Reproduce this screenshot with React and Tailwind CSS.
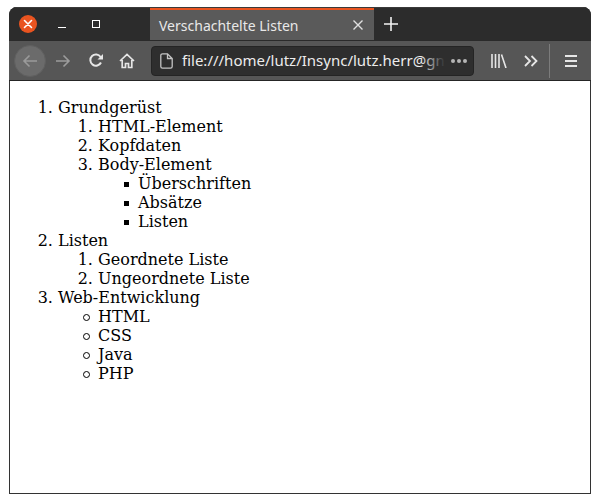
import React from 'react'

function Item({ children, sub }) {
  return (
    <li>
      {children}
      {sub}
    </li>
  )
}

function Square({ children }) {
  return (
    <li className="relative before:absolute before:left-[-14px] before:top-[8px] before:w-[5px] before:h-[5px] before:bg-black">
      {children}
    </li>
  )
}

function Circle({ children }) {
  return (
    <li className="relative before:absolute before:left-[-15px] before:top-[7px] before:w-[7px] before:h-[7px] before:rounded-full before:border before:border-black">
      {children}
    </li>
  )
}

export default function App() {
  return (
    <div className="w-[600px] h-[503px] bg-white pt-[7px] pl-[9px] pr-[9px] pb-[9px] overflow-hidden">
      <div className="h-full flex flex-col rounded-t-[8px] overflow-hidden bg-[#2c2c2c]">
        {/* Tab strip */}
        <div className="h-[33px] shrink-0 flex bg-[#2c2c2c] border-t border-[#3a3a3a]">
          <div className="w-[141px] shrink-0 flex items-center pl-[10px]">
            <div className="w-[18px] h-[18px] rounded-full bg-[#e95420] flex items-center justify-center">
              <svg width="10" height="10" viewBox="0 0 10 10" stroke="#fff" strokeWidth="1.6" strokeLinecap="round">
                <path d="M1.5 1.5 8.5 8.5M8.5 1.5 1.5 8.5" />
              </svg>
            </div>
            <div className="ml-[21px] w-[8px] h-[1px] mt-[6px] bg-white"></div>
            <div className="ml-[26px] w-[8px] h-[8px] border border-white"></div>
          </div>
          <div className="w-[224px] shrink-0 bg-[#5a5a5a] border-t-2 border-[#e95420] flex items-center pl-[9px] pr-[11px] justify-between text-[#e8e8e8]">
            <span className="font-['Noto_Sans',sans-serif] text-[14px] whitespace-nowrap">Verschachtelte Listen</span>
            <svg width="10" height="10" viewBox="0 0 10 10" stroke="#e0e0e0" strokeWidth="1.4">
              <path d="M.5.5l9 9M9.5.5l-9 9" />
            </svg>
          </div>
          <div className="w-[34px] flex items-center justify-center">
            <svg width="14" height="14" viewBox="0 0 14 14" stroke="#f2f2f2" strokeWidth="1.6">
              <path d="M7 0v14M0 7h14" />
            </svg>
          </div>
        </div>

        {/* Toolbar */}
        <div className="h-[41px] shrink-0 flex items-center bg-[#565656] border-t border-[#2a2a2a] border-b border-b-[#252525] relative">
          <div className="ml-[5px] w-[32px] h-[32px] rounded-full bg-[#6b6b6b] border border-[#5f5f5f] flex items-center justify-center">
            <svg width="16" height="14" viewBox="0 0 16 14" fill="none" stroke="#9a9a9a" strokeWidth="1.6">
              <path d="M15 7H2M7.5 1.5 2 7l5.5 5.5" />
            </svg>
          </div>
          <svg className="ml-[9px]" width="16" height="14" viewBox="0 0 16 14" fill="none" stroke="#9c9c9c" strokeWidth="1.6">
            <path d="M1 7h13M8.5 1.5 14 7l-5.5 5.5" />
          </svg>
          <svg className="ml-[17px]" width="16" height="15" viewBox="0 0 16 15" fill="none" stroke="#e6e6e6" strokeWidth="2">
            <path d="M13 9.5A5.6 5.6 0 1 1 12.6 4" />
            <path d="M15 1v5.5H9.500z" fill="#e6e6e6" stroke="none" />
          </svg>
          <svg className="ml-[15px]" width="16" height="16" viewBox="0 0 16 16" fill="none" stroke="#e6e6e6" strokeWidth="1.7">
            <path d="M1 8 8 1.500 15 8M3.200 7v7.500h3.300v-4h3v4h3.300V7" />
          </svg>
          <div className="ml-[16px] w-[323px] h-[30px] rounded-[4px] bg-[#2e2e2e] border border-[#242424] flex items-center pl-[8px] pr-[7px]">
            <svg className="shrink-0" width="13" height="16" viewBox="0 0 13 16" fill="none" stroke="#c4c4c4" strokeWidth="1.3">
              <path d="M2.500.8h5l4.700 4.700v8a1.700 1.700 0 0 1-1.700 1.700h-8A1.700 1.700 0 0 1 .8 13.500V2.500A1.700 1.700 0 0 1 2.500.8zM7.500.8v4.700h4.700" />
            </svg>
            <div className="ml-[9px] flex-1 relative font-['Noto_Sans',sans-serif] text-[15px] text-[#ececec] whitespace-nowrap">
              file:///home/lutz/Insync/lutz.herr@gn
              <div className="absolute right-0 top-0 bottom-0 w-[24px] bg-gradient-to-r from-transparent to-[#2e2e2e]"></div>
            </div>
            <div className="ml-[6px] flex gap-[2px] shrink-0">
              <span className="w-[4px] h-[4px] rounded-full bg-[#b5b5b5]"></span>
              <span className="w-[4px] h-[4px] rounded-full bg-[#b5b5b5]"></span>
              <span className="w-[4px] h-[4px] rounded-full bg-[#b5b5b5]"></span>
            </div>
          </div>
          <svg className="ml-[17px]" width="16" height="14" viewBox="0 0 16 14" fill="none" stroke="#e6e6e6" strokeWidth="1.6">
            <path d="M1 0v14M4.500 0v14M8 0v14M10.500.5l4.500 13.500" />
          </svg>
          <svg className="ml-[17px]" width="14" height="12" viewBox="0 0 14 12" fill="none" stroke="#e6e6e6" strokeWidth="1.8">
            <path d="M1 1l5 5-5 5M7.500 1l5 5-5 5" />
          </svg>
          <div className="ml-[11px] w-[1px] h-[34px] bg-[#7c7c7c]"></div>
          <div className="ml-[15px] w-[12px] flex flex-col gap-[3px]">
            <div className="h-[2px] bg-[#e6e6e6]"></div>
            <div className="h-[2px] bg-[#e6e6e6]"></div>
            <div className="h-[2px] bg-[#e6e6e6]"></div>
          </div>
        </div>

        {/* Page content */}
        <div className="flex-1 bg-white border-l border-r border-b border-[#333] pt-[17px] pl-[8px] font-['DejaVu_Serif',serif] text-[16px] leading-[19px] text-black">
          <ol className="list-decimal pl-10">
            <Item
              sub={
                <ol className="list-decimal pl-10">
                  <li>HTML-Element</li>
                  <li>Kopfdaten</li>
                  <Item
                    sub={
                      <ul className="list-none pl-10">
                        <Square>Überschriften</Square>
                        <Square>Absätze</Square>
                        <Square>Listen</Square>
                      </ul>
                    }
                  >
                    Body-Element
                  </Item>
                </ol>
              }
            >
              Grundgerüst
            </Item>
            <Item
              sub={
                <ol className="list-decimal pl-10">
                  <li>Geordnete Liste</li>
                  <li>Ungeordnete Liste</li>
                </ol>
              }
            >
              Listen
            </Item>
            <Item
              sub={
                <ul className="list-none pl-10">
                  <Circle>HTML</Circle>
                  <Circle>CSS</Circle>
                  <Circle>Java</Circle>
                  <Circle>PHP</Circle>
                </ul>
              }
            >
              Web-Entwicklung
            </Item>
          </ol>
        </div>
      </div>
    </div>
  )
}
